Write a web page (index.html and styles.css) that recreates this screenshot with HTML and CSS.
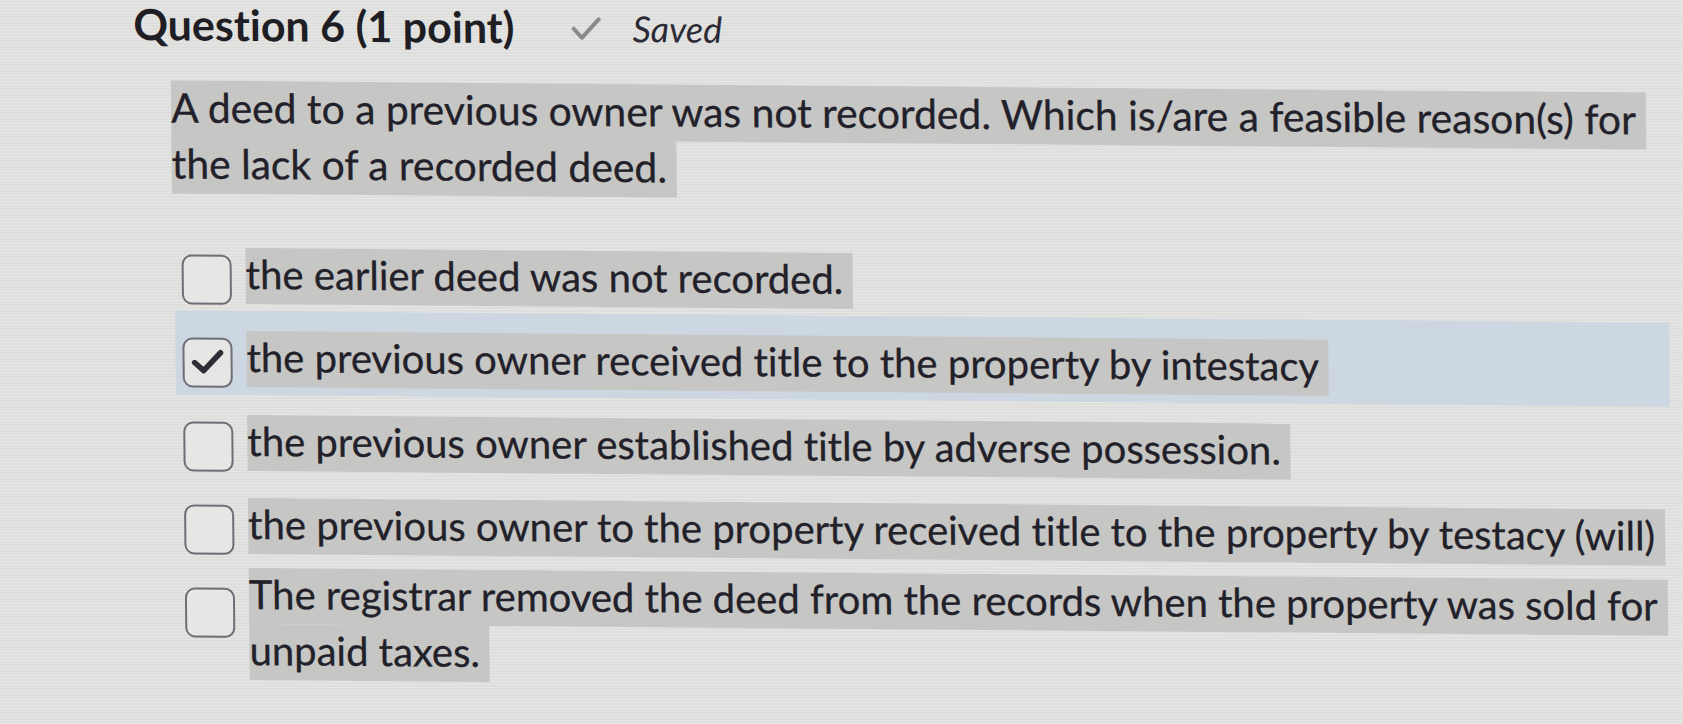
FILE: index.html
```html
<!DOCTYPE html>
<html lang="en">
<head>
<meta charset="utf-8">
<title>Question 6</title>
<link rel="stylesheet" href="styles.css">
</head>
<body>
<div class="page">
  <header class="qhead">
    <h2 class="qtitle">Question 6 (1 point)</h2>
    <svg class="saved-icon" viewBox="0 0 30 24" aria-hidden="true"><polyline points="2.5,12 10.5,21 27.5,2.5"/></svg>
    <span class="saved">Saved</span>
  </header>
  <p class="qtext"><span class="hl">A deed to a previous owner was not recorded. Which is/are a feasible reason(s) for<br>the lack of a recorded deed.</span></p>
  <ul class="options">
    <li class="option"><span class="box"></span><span class="label"><span class="hl">the earlier deed was not recorded.</span></span></li>
    <li class="option selected"><span class="box checked"><svg viewBox="0 0 46 46" aria-hidden="true"><polyline points="10,23 19,31 36,13"/></svg></span><span class="label"><span class="hl">the previous owner received title to the property by intestacy</span></span></li>
    <li class="option"><span class="box"></span><span class="label"><span class="hl">the previous owner established title by adverse possession.</span></span></li>
    <li class="option"><span class="box"></span><span class="label"><span class="hl">the previous owner to the property received title to the property by testacy (will)</span></span></li>
    <li class="option multi"><span class="box"></span><span class="label"><span class="hl">The registrar removed the deed from the records when the property was sold for<br>unpaid taxes.</span></span></li>
  </ul>
</div>
</body>
</html>
```
FILE: styles.css
```css
html, body {
  margin: 0;
  height: 100%;
}
body {
  background-color: #e3e3e1;
  background-image: repeating-linear-gradient(to bottom, rgba(255,255,255,0.12) 0 1px, rgba(0,0,0,0.025) 1px 3px);
  font-family: Lato, "Open Sans", sans-serif;
  font-variant-ligatures: none;
  color: #22212a;
  overflow: hidden;
}
.page {
  transform-origin: 0 0;
  transform: matrix(1, 0.0082, 0.01, 1, 0, 0);
}
.qhead {
  display: flex;
  align-items: flex-start;
  padding: 3px 0 0 133px;
  height: 40px;
}
.qtitle {
  margin: 0;
  font-size: 43px;
  font-weight: 700;
  line-height: 40px;
  color: #1f1e25;
  white-space: nowrap;
}
.saved-icon {
  flex: none;
  width: 30px;
  height: 24px;
  margin-left: 57px;
  margin-top: 9px;
}
.saved-icon polyline {
  fill: none;
  stroke: #8b8b8d;
  stroke-width: 4;
  stroke-linecap: round;
  stroke-linejoin: round;
}
.saved {
  font-style: italic;
  font-size: 36px;
  line-height: 40px;
  margin-left: 31px;
  margin-top: 0;
  color: #2b2a35;
  white-space: nowrap;
}
.qtext {
  margin: 35px 0 0 170px;
  font-size: 40.8px;
  line-height: 56px;
  white-space: nowrap;
  -webkit-text-stroke: 0.3px #22212a;
}
.hl {
  background: #c6c6c4;
  padding: 2px 10px 6px 0;
  -webkit-box-decoration-break: clone;
  box-decoration-break: clone;
}
.options {
  list-style: none;
  margin: 36px 0 0 172px;
  padding: 0;
  width: 1494px;
}
.option {
  display: flex;
  align-items: flex-start;
  padding: 18px 0 5.5px;
}
.option.selected {
  background: #ccd7e1;
  padding-bottom: 7.5px;
}
.option.multi {
  padding-top: 6px;
}
.box {
  flex: none;
  width: 50px;
  height: 50px;
  box-sizing: border-box;
  border: 2px solid #6f6e76;
  border-radius: 10px;
  margin: 9px 0 0 7px;
  background: #e6e6e5;
}
.box svg {
  display: block;
  width: 46px;
  height: 46px;
}
.box svg polyline {
  fill: none;
  stroke: #2f2e36;
  stroke-width: 5.5;
  stroke-linecap: round;
  stroke-linejoin: round;
}
.option.multi .box {
  margin-top: 22px;
}
.label {
  margin-left: 14px;
  font-size: 40px;
  line-height: 56px;
  white-space: nowrap;
  -webkit-text-stroke: 0.3px #22212a;
}
```
